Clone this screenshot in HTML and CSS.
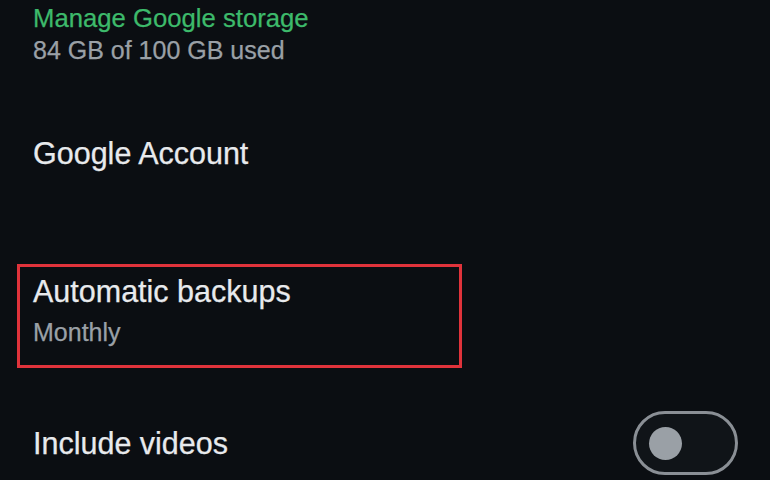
FILE: index.html
```html
<!DOCTYPE html>
<html>
<head>
<meta charset="utf-8">
<link rel="stylesheet" href="styles.css">
</head>
<body>
<div class="screen">
  <div class="item storage">
    <div class="title green">Manage Google storage</div>
    <div class="sub">84 GB of 100 GB used</div>
  </div>
  <div class="item account">
    <div class="title">Google Account</div>
  </div>
  <div class="item backups">
    <div class="title">Automatic backups</div>
    <div class="sub">Monthly</div>
  </div>
  <div class="item videos">
    <div class="title">Include videos</div>
    <div class="toggle"><div class="knob"></div></div>
  </div>
</div>
</body>
</html>
```
FILE: styles.css
```css
html, body {
  margin: 0;
  padding: 0;
  background: #0b0e12;
}
.screen {
  width: 770px;
  height: 480px;
  overflow: hidden;
  font-family: "Liberation Sans", Arial, sans-serif;
  color: #e8eaed;
  display: flex;
  flex-direction: column;
  -webkit-text-stroke: 0.25px currentColor;
}
.item {
  padding-left: 33px;
  flex: none;
}
.title {
  font-size: 30.5px;
  line-height: 36px;
}
.sub {
  font-size: 25px;
  line-height: 32px;
  color: #9aa0a6;
}
.storage .title {
  font-size: 25.7px;
  line-height: 32px;
}
.green {
  color: #3dba6b;
}
.storage {
  padding-top: 2px;
}
.account {
  margin-top: 69px;
}
.backups {
  margin-top: 93px;
  margin-left: 17px;
  padding-left: 13px;
  width: 445px;
  height: 104px;
  border: 3px solid #e0333b;
  box-sizing: border-box;
  padding-top: 6px;
}
.backups .sub {
  margin-top: 7px;
}
.videos {
  margin-top: 43px;
  display: flex;
  align-items: center;
  justify-content: space-between;
  padding-right: 32px;
}
.toggle {
  width: 105px;
  height: 64px;
  box-sizing: border-box;
  border: 3px solid #8a8f95;
  border-radius: 32px;
  display: flex;
  align-items: center;
  padding-left: 13px;
  background: #101418;
}
.knob {
  width: 33px;
  height: 33px;
  border-radius: 50%;
  background: #9aa0a6;
}
```
